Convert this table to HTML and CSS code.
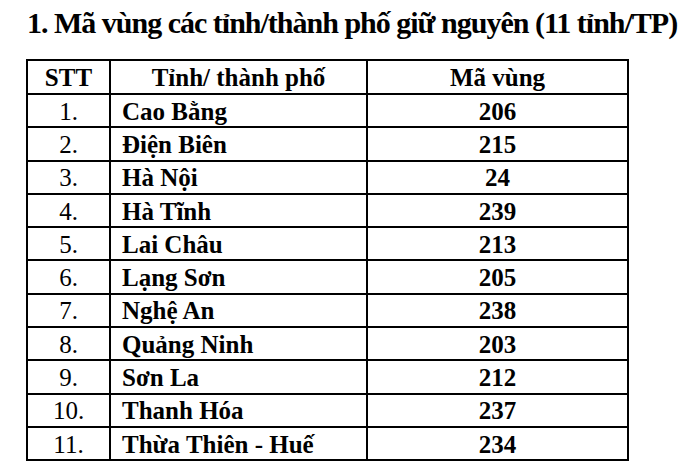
FILE: index.html
```html
<!DOCTYPE html>
<html lang="vi">
<head>
<meta charset="utf-8">
<link rel="stylesheet" href="styles.css">
</head>
<body>
<div class="page">
  <h1 class="title">1. Mã vùng các tỉnh/thành phố giữ nguyên (11 tỉnh/TP)</h1>
  <table class="codes">
    <colgroup>
      <col class="w-stt">
      <col class="w-name">
      <col class="w-code">
    </colgroup>
    <thead>
      <tr><th>STT</th><th>Tỉnh/ thành phố</th><th>Mã vùng</th></tr>
    </thead>
    <tbody>
      <tr><td class="c-stt">1.</td><td class="c-name">Cao Bằng</td><td class="c-code">206</td></tr>
      <tr><td class="c-stt">2.</td><td class="c-name">Điện Biên</td><td class="c-code">215</td></tr>
      <tr><td class="c-stt">3.</td><td class="c-name">Hà Nội</td><td class="c-code">24</td></tr>
      <tr><td class="c-stt">4.</td><td class="c-name">Hà Tĩnh</td><td class="c-code">239</td></tr>
      <tr><td class="c-stt">5.</td><td class="c-name">Lai Châu</td><td class="c-code">213</td></tr>
      <tr><td class="c-stt">6.</td><td class="c-name">Lạng Sơn</td><td class="c-code">205</td></tr>
      <tr><td class="c-stt">7.</td><td class="c-name">Nghệ An</td><td class="c-code">238</td></tr>
      <tr><td class="c-stt">8.</td><td class="c-name">Quảng Ninh</td><td class="c-code">203</td></tr>
      <tr><td class="c-stt">9.</td><td class="c-name">Sơn La</td><td class="c-code">212</td></tr>
      <tr><td class="c-stt">10.</td><td class="c-name">Thanh Hóa</td><td class="c-code">237</td></tr>
      <tr><td class="c-stt">11.</td><td class="c-name">Thừa Thiên - Huế</td><td class="c-code">234</td></tr>
    </tbody>
  </table>
</div>
</body>
</html>
```

FILE: styles.css
```css
html, body {
  margin: 0;
  padding: 0;
  background: #fff;
}
.page {
  font-family: "Liberation Serif", "Times New Roman", serif;
  color: #000;
}
.title {
  margin: 0;
  padding: 5px 0 0 27px;
  font-size: 30px;
  line-height: 36px;
  font-weight: bold;
  letter-spacing: -1px;
  white-space: nowrap;
}
.codes {
  margin: 18px 0 0 26px;
  width: 601px;
  table-layout: fixed;
  border-collapse: collapse;
  border: 2px solid #000;
  font-size: 25px;
}
.w-stt { width: 83px; }
.w-name { width: 257px; }
.w-code { width: 261px; }
.codes th, .codes td {
  border: 2px solid #000;
  padding: 2px 0 0 0;
  line-height: 28px;
  vertical-align: middle;
  white-space: nowrap;
}
.codes th {
  height: 30px;
  font-weight: bold;
  text-align: center;
}
.codes td {
  height: 29.3px;
}
.c-stt {
  text-align: center;
  font-weight: normal;
}
.codes td.c-name {
  text-align: left;
  padding-left: 11px;
  font-weight: bold;
}
.c-code {
  text-align: center;
  font-weight: bold;
}
```
